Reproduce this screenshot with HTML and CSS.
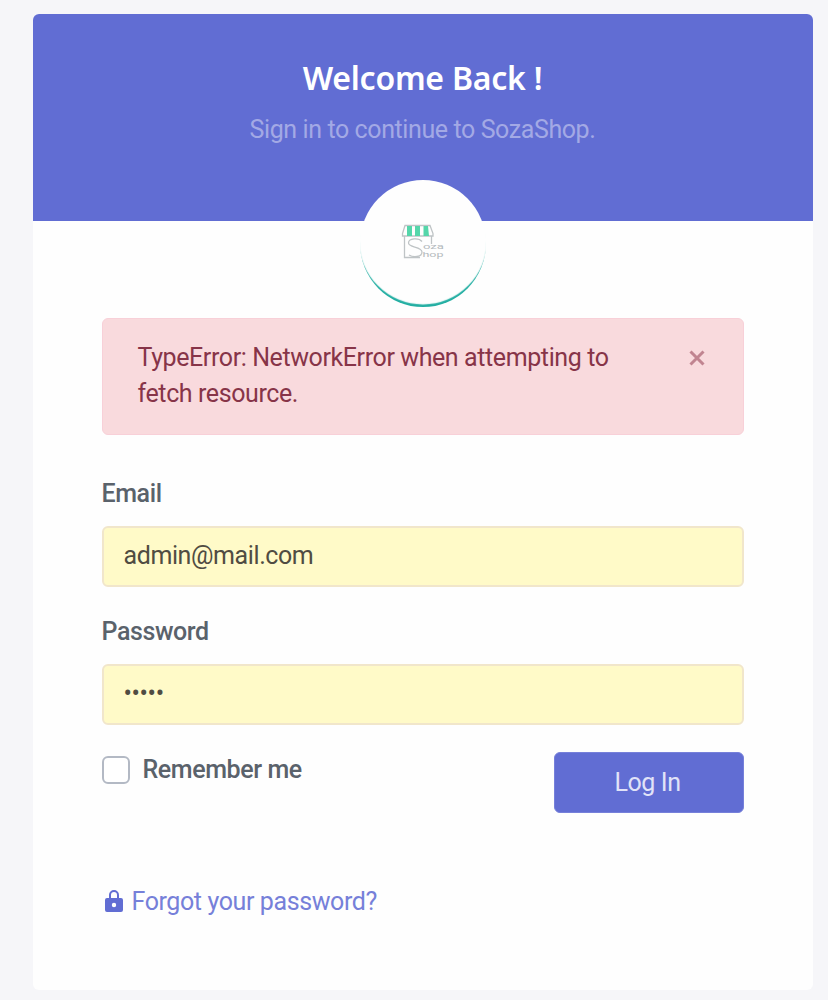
FILE: index.html
```html
<!DOCTYPE html>
<html lang="en">
<head>
<meta charset="utf-8">
<title>Login | SozaShop</title>
<link rel="stylesheet" href="styles.css">
</head>
<body>
<main class="card">
  <header class="card-header">
    <h1 class="title"><span>Welcome Back !</span></h1>
    <p class="subtitle"><span>Sign in to continue to SozaShop.</span></p>
  </header>
  <div class="card-body">
    <div class="logo">
      <svg class="logo-art" viewBox="0 0 44 38" aria-label="Soza Shop">
        <g fill="none" stroke="#bfc4c6" stroke-width="1.3">
          <path d="M3.500 12V33.500H19M30.500 12V20"/>
          <path d="M4 1.500H29L32 9.500V12H1.500V9.500Z"/>
          <path d="M21 17.500C18 13.500 7.500 14 7.500 19C7.500 24 21 22 21 28C21 33.500 12 33.500 8 31"/>
        </g>
        <path fill="#55d6aa" d="M6 2h5v10H6zM14 2h5v10h-5zM22.500 2H27l1 10h-5.500z"/>
        <text x="22" y="24.500" textLength="21" lengthAdjust="spacingAndGlyphs">oza</text>
        <text x="21.500" y="33" textLength="21" lengthAdjust="spacingAndGlyphs">hop</text>
      </svg>
    </div>
    <div class="alert" role="alert">
      <p class="alert-text">TypeError: NetworkError when attempting to<br>fetch resource.</p>
      <svg class="close" viewBox="0 0 18 18"><path d="M2.500 2.500l13 13M15.500 2.500l-13 13"/></svg>
    </div>
    <form class="form">
      <label class="label email-label" for="email">Email</label>
      <input class="input email" id="email" type="text" value="admin@mail.com">
      <label class="label password-label" for="password">Password</label>
      <input class="input password" id="password" type="password" value="admin">
      <div class="actions">
        <label class="remember"><input class="check" type="checkbox"><span>Remember me</span></label>
        <button class="button" type="button">Log In</button>
      </div>
    </form>
    <a class="forgot">
      <svg class="lock" viewBox="0 0 18 22"><path fill-rule="evenodd" d="M9 0a5 5 0 0 0-5 5v3H2a2 2 0 0 0-2 2v10a2 2 0 0 0 2 2h14a2 2 0 0 0 2-2V10a2 2 0 0 0-2-2h-2V5a5 5 0 0 0-5-5zM6 8V5a3 3 0 0 1 6 0v3zM9 12.800a2.200 2.200 0 1 1 0 4.400a2.200 2.200 0 0 1 0-4.400z"/></svg>
      <span>Forgot your password?</span>
    </a>
  </div>
</main>
</body>
</html>
```
FILE: styles.css
```css
* { box-sizing: border-box; }
body {
  margin: 0;
  padding: 14px 15.500px 10px 32.500px;
  height: 1000px;
  overflow: hidden;
  background: #f6f6f9;
  font-family: Roboto, "Liberation Sans", sans-serif;
  font-size: 25px;
  letter-spacing: -.4px;
}
.card {
  height: 976px;
  border-radius: 6px;
  overflow: hidden;
  background: #fefefe;
}
.card-header {
  height: 206.500px;
  padding-top: 44px;
  background: #616dd3;
  text-align: center;
}
.title {
  margin: 0;
  color: #fff;
  font-family: "Noto Sans", Roboto, sans-serif;
  font-size: 32px;
  font-weight: 600;
  line-height: 40px;
  letter-spacing: -.25px;
}
.subtitle {
  margin: 14px 0 0;
  color: #a3a9e5;
  line-height: 36px;
}
.card-body {
  padding: 0 69px;
}
.logo {
  display: flex;
  align-items: center;
  justify-content: center;
  width: 126px;
  height: 127px;
  margin: -41px auto 0;
  border-radius: 50%;
  background: #fefefe;
  box-shadow: inset 0 -3.500px 1px -1px #22aea2;
}
.logo-art {
  width: 44px;
  height: 38px;
}
.logo-art text {
  fill: #b4babd;
  font: 7.500px Roboto, sans-serif;
  letter-spacing: 0;
}
.alert {
  display: flex;
  justify-content: space-between;
  height: 117px;
  margin-top: 11.500px;
  padding: 21px 37px 0 35px;
  border: 1px solid #f8d0d8;
  border-radius: 6px;
  background: #f9dadd;
  color: #873448;
}
.alert-text {
  margin: 0;
  line-height: 36px;
  white-space: nowrap;
}
.close {
  width: 18px;
  height: 18px;
  margin-top: 9px;
  fill: none;
  stroke: #c18490;
  stroke-width: 3;
}
.form {
  display: flex;
  flex-direction: column;
  margin-top: 41px;
}
.label, .remember {
  color: #5a626b;
  font-weight: 500;
  line-height: 36px;
}
.input {
  height: 61px;
  margin: 14px 0 0;
  padding: 0 20px 2px;
  border: 2px solid #f1e6cb;
  border-radius: 6px;
  outline: 0;
  background: #fffac8;
  color: #504c42;
  font: 25px Roboto, sans-serif;
  letter-spacing: -.4px;
}
.password-label { margin-top: 27px; }
.password { padding-bottom: 2px; }
.actions {
  display: flex;
  justify-content: space-between;
  margin-top: 27px;
}
.remember {
  display: flex;
  align-items: center;
  height: 36px;
}
.check {
  appearance: none;
  width: 28px;
  height: 28px;
  margin: 0 13px 0 0;
  border: 2px solid #b3b9c4;
  border-radius: 6px;
  background: #fff;
}
.button {
  width: 190px;
  height: 61px;
  padding: 0 2px 0 0;
  border: 1px solid #7680da;
  border-radius: 6px;
  background: #616dd3;
  color: #e1e3f8;
  font: 25px Roboto, sans-serif;
  letter-spacing: -.4px;
}
.forgot {
  display: flex;
  align-items: center;
  height: 36px;
  margin-top: 70px;
  padding-left: 3px;
  color: #7680d9;
}
.lock {
  width: 18px;
  height: 22px;
  margin-right: 9px;
  fill: #616dd3;
}
```
